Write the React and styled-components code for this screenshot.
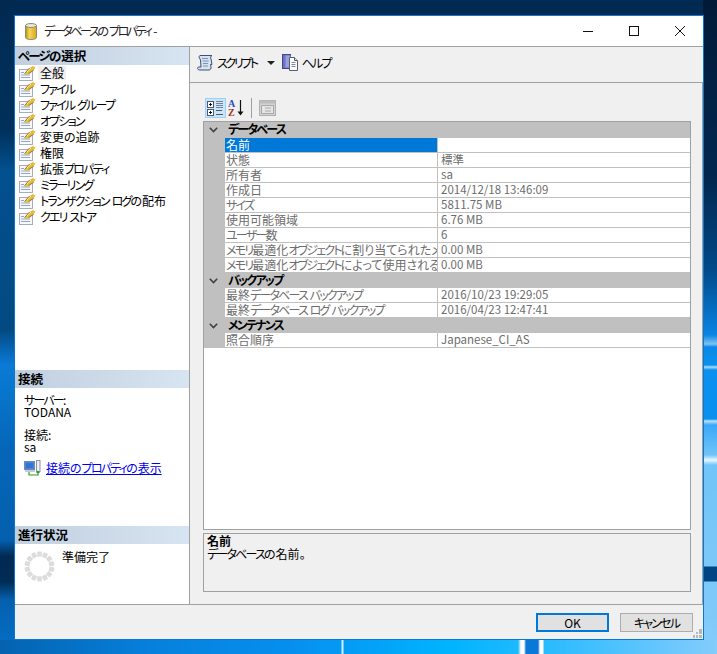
import styled, { createGlobalStyle } from "styled-components";

const UI_FONT = `"Noto Sans CJK JP", "Liberation Sans", sans-serif`;

const GlobalStyle = createGlobalStyle`
  html, body {
    margin: 0;
    padding: 0;
  }
  body {
    width: 717px;
    height: 654px;
    overflow: hidden;
    box-sizing: border-box;
    padding: 15px 0 0 14px;
    background-color: #012a52;
    background-repeat: no-repeat;
    background-image:
      linear-gradient(90deg, transparent 341px, #cfeeff 342px, #cfeeff 343px, transparent 344px, transparent 518px, #ffffff 521px, #ffffff 524px, #0a78d8 526px, #0a78d8 538px, #ffffff 540px, #ffffff 543px, transparent 544px),
      linear-gradient(90deg, #0462b0 0, #0680dc 150px, #0690f0 300px, #00b4ff 450px, #30bcff 560px, #84ccfc 717px),
      linear-gradient(180deg, #012a52 0, #01305c 130px, #02508e 170px, #034a82 330px, #0a7ad6 365px, #0878d0 380px, #0566b8 450px, #0460ae 540px, #012a52 556px, #012c56 582px, #0560ae 600px, #0470c8 654px),
      linear-gradient(180deg, #021a38 0, #022850 180px, #014a8a 270px, #0a84e4 335px, #7cc4f4 344px, #0a88e8 347px, #0a90ee 365px, #a8dcfa 367px, #0a90ee 370px, #0a90ee 419px, #b8e4fc 421px, #3aa8f8 425px, #70c4f8 455px, #e8f6ff 460px, #70c4f8 465px, #7cc8f8 566px, #004484 567px, #004484 581px, #7cc8f8 582px, #84ccfc 654px);
    background-size: 717px 14px, 717px 14px, 14px 654px, 14px 654px;
    background-position: 0 640px, 0 640px, 0 0, 703px 0;
  }
`;

const Window = styled.div`
  position: relative;
  box-sizing: border-box;
  width: 690px;
  height: 625px;
  border: 1px solid #0a78d0;
  background: #f0f0f0;
  display: flex;
  flex-direction: column;
  font-family: ${UI_FONT};
  font-size: 12px;
  font-feature-settings: "palt";
  color: #000;
`;

// katakana in the original font is much narrower than the full-width CJK face
const Kana = styled.span`
  letter-spacing: ${(p) => (p.$tight ? "-2.4px" : "-1.8px")};
`;

const Jp = ({ children, tight }) =>
  children
    .split(/([\u30A0-\u30FF]+)/)
    .map((part, i) => (i % 2 ? <Kana key={i} $tight={tight}>{part}</Kana> : part));

const TitleBar = styled.div`
  height: 31px;
  box-sizing: border-box;
  flex: none;
  background: #fff;
  border-bottom: 1px solid #a0a0a0;
  display: flex;
  align-items: center;
  padding-left: 10px;
`;

const TitleText = styled.span`
  margin-left: 7px;
  line-height: 30px;
  color: #222;
`;

const WindowControls = styled.div`
  margin-left: auto;
  display: flex;
`;

const ControlButton = styled.div`
  width: 46px;
  height: 30px;
  display: flex;
  align-items: center;
  justify-content: center;
  color: #111;
`;

const Body = styled.div`
  flex: 1;
  min-height: 0;
  display: flex;
`;

const Sidebar = styled.div`
  width: 174px;
  flex: none;
  background: #fff;
  border-right: 1px solid #a0a0a0;
  display: grid;
  grid-template-rows: 323px 156px 77px;
`;

const SideSection = styled.section`
  display: flex;
  flex-direction: column;
  min-height: 0;
`;

const SideHeader = styled.div`
  height: 18px;
  flex: none;
  padding-left: 3px;
  background: linear-gradient(90deg, #c1cfdf 0, #d7e4f1 100%);
  font-weight: 700;
  font-size: 12.5px;
  line-height: 18px;
`;

const PageList = styled.div`
  display: flex;
  flex-direction: column;
`;

const PageItem = styled.div`
  height: 16px;
  display: flex;
  align-items: flex-start;
  padding-left: 4px;
`;

const PageLabel = styled.span`
  margin: 1px 0 0 2px;
  padding: 0 2px;
  line-height: 14px;
  background: ${(p) => (p.$active ? "#f0f0f0" : "transparent")};
`;

const ConnectionInfo = styled.div`
  padding: 6px 0 0 9px;
  line-height: 12px;
`;

const InfoBlock = styled.div`
  margin-bottom: 11px;
`;

const InfoLine = styled.div`
  height: 12px;
`;

const ConnectionLink = styled.div`
  display: flex;
  align-items: center;
  gap: 5px;
  margin-top: -4px;
`;

const LinkText = styled.a`
  color: #0000ee;
  text-decoration: underline;
  line-height: 16px;
  cursor: pointer;
`;

const ProgressRow = styled.div`
  display: flex;
  padding: 7px 0 0 9px;
`;

const ProgressText = styled.span`
  margin: -1px 0 0 7px;
  line-height: 13px;
`;

const Main = styled.div`
  flex: 1;
  min-width: 0;
  display: flex;
  flex-direction: column;
`;

const Toolbar = styled.div`
  height: 36px;
  box-sizing: border-box;
  flex: none;
  border-bottom: 1px solid #a0a0a0;
  display: flex;
  align-items: center;
  padding: 0 0 4px 7px;
`;

const ToolLabel = styled.span`
  margin-left: 3px;
  line-height: 16px;
`;

const Caret = styled.span`
  width: 0;
  height: 0;
  margin: 0 7px 0 10px;
  border-left: 4px solid transparent;
  border-right: 4px solid transparent;
  border-top: 4px solid #222;
`;

const Content = styled.div`
  flex: 1;
  min-height: 0;
  display: flex;
  flex-direction: column;
  padding: 14px 11px 12px 13px;
  border-right: 1px solid #a0a0a0;
`;

const GridToolbar = styled.div`
  height: 21px;
  flex: none;
  display: flex;
  align-items: center;
  margin: 0 0 3px 2px;
`;

const GridToolButton = styled.div`
  width: 21px;
  height: 20px;
  box-sizing: border-box;
  display: flex;
  align-items: center;
  justify-content: center;
  border: 1px solid ${(p) => (p.$on ? "#99d1ff" : "transparent")};
  background: ${(p) => (p.$on ? "#cce4f7" : "transparent")};
`;

const GridToolSeparator = styled.div`
  width: 1px;
  height: 20px;
  margin: 0 5px 0 4px;
  background: #a0a0a0;
`;

const PropertyGrid = styled.div`
  flex: 1;
  min-height: 0;
  background: #fff;
  border: 1px solid #a0a0a0;
`;

const CategoryRow = styled.div`
  height: 15px;
  background: #c0c0c0;
  display: flex;
  align-items: flex-start;
  font-weight: 700;
  line-height: 14px;
`;

const GridSection = styled.div`
  &:first-child ${CategoryRow} {
    height: 16px;
  }
`;

const Chevron = styled.span`
  width: 19px;
  height: 15px;
  display: flex;
  align-items: center;
  padding-left: 5px;
`;

const PropertyRow = styled.div`
  height: 15px;
  box-sizing: border-box;
  display: grid;
  grid-template-columns: 213px 1fr;
  border-left: 21px solid #c0c0c0;
  border-bottom: 1px solid #c0c0c0;
  color: #6d6d6d;
  line-height: 13px;
`;

const PropertyName = styled.div`
  overflow: hidden;
  white-space: nowrap;
  padding-left: 1px;
  border-right: 1px solid #c0c0c0;
  color: ${(p) => (p.$selected ? "#fff" : "inherit")};
  background: ${(p) => (p.$selected ? "#0078d7" : "transparent")};
`;

const PropertyValue = styled.div`
  overflow: hidden;
  white-space: nowrap;
  padding-left: 3px;
  font-size: 11.5px;
`;

const Description = styled.div`
  height: 59px;
  flex: none;
  box-sizing: border-box;
  margin-top: 3px;
  border: 1px solid #a0a0a0;
  padding: 0 3px;
  line-height: 13px;
`;

const DescriptionTitle = styled.div`
  font-weight: 700;
`;

const Footer = styled.div`
  height: 35px;
  box-sizing: border-box;
  flex: none;
  border-top: 1px solid #a0a0a0;
  display: flex;
  justify-content: flex-end;
  gap: 11px;
  padding: 8px 10px 0 0;
`;

const DialogButton = styled.div`
  width: 73px;
  height: 19px;
  box-sizing: border-box;
  display: flex;
  align-items: center;
  justify-content: center;
  background: #e1e1e1;
  border: ${(p) => (p.$primary ? "2px solid #0078d7" : "1px solid #adadad")};
  line-height: 15px;
`;

const Grip = styled.svg`
  position: absolute;
  right: 1px;
  bottom: 1px;
`;

const PageIcon = () => (
  <svg width="17" height="16" viewBox="0 0 17 16">
    <rect x="0.5" y="4.5" width="13" height="11" fill="#f7f9fc" stroke="#a3adc0" />
    <path d="M2 7.5h3M2 10h9M2 12.5h9" stroke="#8fa6c8" />
    <path d="M5.5 8.5l5-5.5 3-2 3 1.5-2 3-5 4-4 .5z" fill="#e6bc3e" />
    <path d="M5.5 8.5l5-5.5M9.5 8.5l5-3" stroke="#6f6a3c" strokeWidth="0.8" />
    <path d="M8 7l4-4" stroke="#f8e79a" />
  </svg>
);

const DatabaseIcon = () => (
  <svg width="12" height="17" viewBox="0 0 12 17">
    <defs>
      <linearGradient id="dbBody" x1="0" x2="1" y1="0" y2="0">
        <stop offset="0" stopColor="#b58a10" />
        <stop offset="0.35" stopColor="#f6d65a" />
        <stop offset="1" stopColor="#d9a818" />
      </linearGradient>
    </defs>
    <path d="M0.5 2.5v12c0 1.2 2.4 2 5.5 2s5.5-.8 5.5-2v-12z" fill="url(#dbBody)" stroke="#8b8b78" />
    <ellipse cx="6" cy="2.5" rx="5.5" ry="2" fill="#e8e8d8" stroke="#8b8b78" />
  </svg>
);

const MinimizeIcon = () => (
  <svg width="10" height="10" viewBox="0 0 10 10">
    <path d="M0 5.5h10" stroke="currentColor" />
  </svg>
);

const MaximizeIcon = () => (
  <svg width="10" height="10" viewBox="0 0 10 10">
    <rect x="0.5" y="0.5" width="9" height="9" fill="none" stroke="currentColor" />
  </svg>
);

const CloseIcon = () => (
  <svg width="10" height="10" viewBox="0 0 10 10">
    <path d="M0 0l10 10M10 0L0 10" stroke="currentColor" strokeWidth="1" />
  </svg>
);

const ScriptIcon = () => (
  <svg width="17" height="17" viewBox="0 0 17 17">
    <path
      d="M3 1.5h12c-1.4.8-1.8 2-1 3.5l1 5.5H13.5l.5 2.5c.3 1.6-.5 3-2 3H2.5c-1.2 0-2-.9-2-1.8 0-.8.7-1.2 1.5-1.2h2L3.5 6 2.2 3.6C1.9 2.6 2.2 1.9 3 1.5z"
      fill="#d4e2f2"
      stroke="#3f5070"
    />
    <path d="M5 4.5h6M5.5 7h6M6 9.5h5M6 12h5" stroke="#7d93b3" />
  </svg>
);

const HelpIcon = () => (
  <svg width="17" height="17" viewBox="0 0 17 17">
    <rect x="0.5" y="0.5" width="8" height="14" fill="#6f72c4" stroke="#3f4590" />
    <rect x="3.5" y="1.5" width="5" height="12" fill="#9aa0dd" />
    <path d="M7.5 3.5h5l3 3v10h-8z" fill="#fff" stroke="#555c70" />
    <path d="M9.5 8.5h4M9.5 10.5h4M9.5 12.5h4" stroke="#7d879c" />
    <path d="M12.5 3.5v3h3" fill="#dfe4ee" stroke="#555c70" />
  </svg>
);

const CategorizedIcon = () => (
  <svg width="17" height="16" viewBox="0 0 17 16">
    <rect x="0.5" y="1.5" width="6" height="6" fill="#fff" stroke="#4c5a70" />
    <path d="M2 4.5h3M3.5 3v3" stroke="#111" />
    <rect x="0.5" y="9.5" width="6" height="6" fill="#fff" stroke="#4c5a70" />
    <path d="M2 12.5h3M3.5 11v3" stroke="#111" />
    <path d="M9 1.5h7M9 3.5h7M9 5.5h7M9 7.5h7" stroke="#77849a" />
    <path d="M9 10.5h6M9 14.5h7" stroke="#4c5a70" />
  </svg>
);

const SortIcon = () => (
  <svg width="17" height="18" viewBox="0 0 17 18">
    <text x="0" y="8" fontFamily="Liberation Serif" fontWeight="700" fontSize="10" fill="#2a4fb8">A</text>
    <text x="0" y="17" fontFamily="Liberation Serif" fontWeight="700" fontSize="10" fill="#a23030">Z</text>
    <path d="M12.5 1v14" stroke="#111" strokeWidth="1.2" />
    <path d="M9.5 12.5l3 4 3-4z" fill="#111" />
  </svg>
);

const PagesIcon = () => (
  <svg width="17" height="16" viewBox="0 0 17 16">
    <rect x="0.5" y="0.5" width="16" height="15" fill="#d4d4d4" stroke="#b0b0b0" />
    <rect x="0.5" y="0.5" width="16" height="3" fill="#bcbcbc" />
    <rect x="2.5" y="5.5" width="12" height="8" fill="#e6e6e6" stroke="#a8a8a8" />
    <path d="M6 8h6M6 11h6" stroke="#a8a8a8" />
  </svg>
);

const ChevronIcon = () => (
  <svg width="9" height="6" viewBox="0 0 9 6">
    <path d="M0.8 0.8l3.7 3.7 3.7-3.7" fill="none" stroke="#404040" strokeWidth="1.6" />
  </svg>
);

const ConnectionIcon = () => (
  <svg width="17" height="16" viewBox="0 0 17 16">
    <rect x="0.5" y="1.5" width="10" height="8" fill="#3f8ae0" stroke="#7a8aa0" />
    <rect x="2" y="3" width="7" height="5" fill="#2f76d8" />
    <rect x="1" y="10" width="10" height="2" fill="#c4cad6" />
    <rect x="12.5" y="0.5" width="3.5" height="11" fill="#eef0f4" stroke="#8a93a8" />
    <path d="M5 12v3h9v-3" fill="none" stroke="#2f9a20" strokeWidth="1.2" />
    <path d="M12 13l2-2.5 2 2.5z" fill="#2f9a20" />
  </svg>
);

const SpinnerIcon = () => (
  <svg width="31" height="31" viewBox="0 0 31 31">
    {Array.from({ length: 14 }, (_, i) => (
      <rect
        key={i}
        x="13.2"
        y="0.5"
        width="4.6"
        height="5.2"
        rx="1"
        fill="#dcdcdc"
        transform={`rotate(${(i * 360) / 14} 15.5 15.5)`}
      />
    ))}
  </svg>
);

const GripIcon = () => (
  <Grip width="9" height="9" viewBox="0 0 9 9">
    <path d="M6 0h3v3H6zM3 3h2v2H3zM6 3h3v2H6zM0 6h2v3H0zM3 6h2v3H3zM6 6h3v3H6z" fill="#b8b8b8" />
  </Grip>
);

const PAGES = [
  "全般",
  "ファイル",
  "ファイル グループ",
  "オプション",
  "変更の追跡",
  "権限",
  "拡張プロパティ",
  "ミラーリング",
  "トランザクション ログの配布",
  "クエリ ストア",
];

const SECTIONS = [
  {
    title: "データベース",
    rows: [
      ["名前", ""],
      ["状態", "標準"],
      ["所有者", "sa"],
      ["作成日", "2014/12/18 13:46:09"],
      ["サイズ", "5811.75 MB"],
      ["使用可能領域", "6.76 MB"],
      ["ユーザー数", "6"],
      ["メモリ最適化オブジェクトに割り当てられたメモリ", "0.00 MB"],
      ["メモリ最適化オブジェクトによって使用されるメモリ", "0.00 MB"],
    ],
  },
  {
    title: "バックアップ",
    rows: [
      ["最終データベース バックアップ", "2016/10/23 19:29:05"],
      ["最終データベース ログ バックアップ", "2016/04/23 12:47:41"],
    ],
  },
  {
    title: "メンテナンス",
    rows: [["照合順序", "Japanese_CI_AS"]],
  },
];

const App = () => {
  return (
    <>
      <GlobalStyle />
      <Window>
        <TitleBar>
          <DatabaseIcon />
          <TitleText><Jp tight>データベースのプロパティ -</Jp></TitleText>
          <WindowControls>
            <ControlButton><MinimizeIcon /></ControlButton>
            <ControlButton><MaximizeIcon /></ControlButton>
            <ControlButton><CloseIcon /></ControlButton>
          </WindowControls>
        </TitleBar>
        <Body>
          <Sidebar>
            <SideSection>
              <SideHeader><Jp>ページの選択</Jp></SideHeader>
              <PageList>
                {PAGES.map((page, i) => (
                  <PageItem key={page}>
                    <PageIcon />
                    <PageLabel $active={i === 0}><Jp>{page}</Jp></PageLabel>
                  </PageItem>
                ))}
              </PageList>
            </SideSection>
            <SideSection>
              <SideHeader>接続</SideHeader>
              <ConnectionInfo>
                <InfoBlock>
                  <InfoLine><Jp>サーバー:</Jp></InfoLine>
                  <InfoLine>TODANA</InfoLine>
                </InfoBlock>
                <InfoBlock>
                  <InfoLine>接続:</InfoLine>
                  <InfoLine>sa</InfoLine>
                </InfoBlock>
                <ConnectionLink>
                  <ConnectionIcon />
                  <LinkText><Jp>接続のプロパティの表示</Jp></LinkText>
                </ConnectionLink>
              </ConnectionInfo>
            </SideSection>
            <SideSection>
              <SideHeader>進行状況</SideHeader>
              <ProgressRow>
                <SpinnerIcon />
                <ProgressText>準備完了</ProgressText>
              </ProgressRow>
            </SideSection>
          </Sidebar>
          <Main>
            <Toolbar>
              <ScriptIcon />
              <ToolLabel><Jp tight>スクリプト</Jp></ToolLabel>
              <Caret />
              <HelpIcon />
              <ToolLabel><Jp>ヘルプ</Jp></ToolLabel>
            </Toolbar>
            <Content>
              <GridToolbar>
                <GridToolButton $on><CategorizedIcon /></GridToolButton>
                <GridToolButton><SortIcon /></GridToolButton>
                <GridToolSeparator />
                <GridToolButton><PagesIcon /></GridToolButton>
              </GridToolbar>
              <PropertyGrid>
                {SECTIONS.map((section) => (
                  <GridSection key={section.title}>
                    <CategoryRow>
                      <Chevron><ChevronIcon /></Chevron>
                      <span><Jp>{section.title}</Jp></span>
                    </CategoryRow>
                    {section.rows.map(([name, value]) => (
                      <PropertyRow key={name}>
                        <PropertyName $selected={name === "名前"}><Jp>{name}</Jp></PropertyName>
                        <PropertyValue>{value}</PropertyValue>
                      </PropertyRow>
                    ))}
                  </GridSection>
                ))}
              </PropertyGrid>
              <Description>
                <DescriptionTitle>名前</DescriptionTitle>
                <div><Jp>データベースの名前。</Jp></div>
              </Description>
            </Content>
          </Main>
        </Body>
        <Footer>
          <DialogButton $primary>OK</DialogButton>
          <DialogButton><Jp>キャンセル</Jp></DialogButton>
        </Footer>
        <GripIcon />
      </Window>
    </>
  );
};

export default App;
